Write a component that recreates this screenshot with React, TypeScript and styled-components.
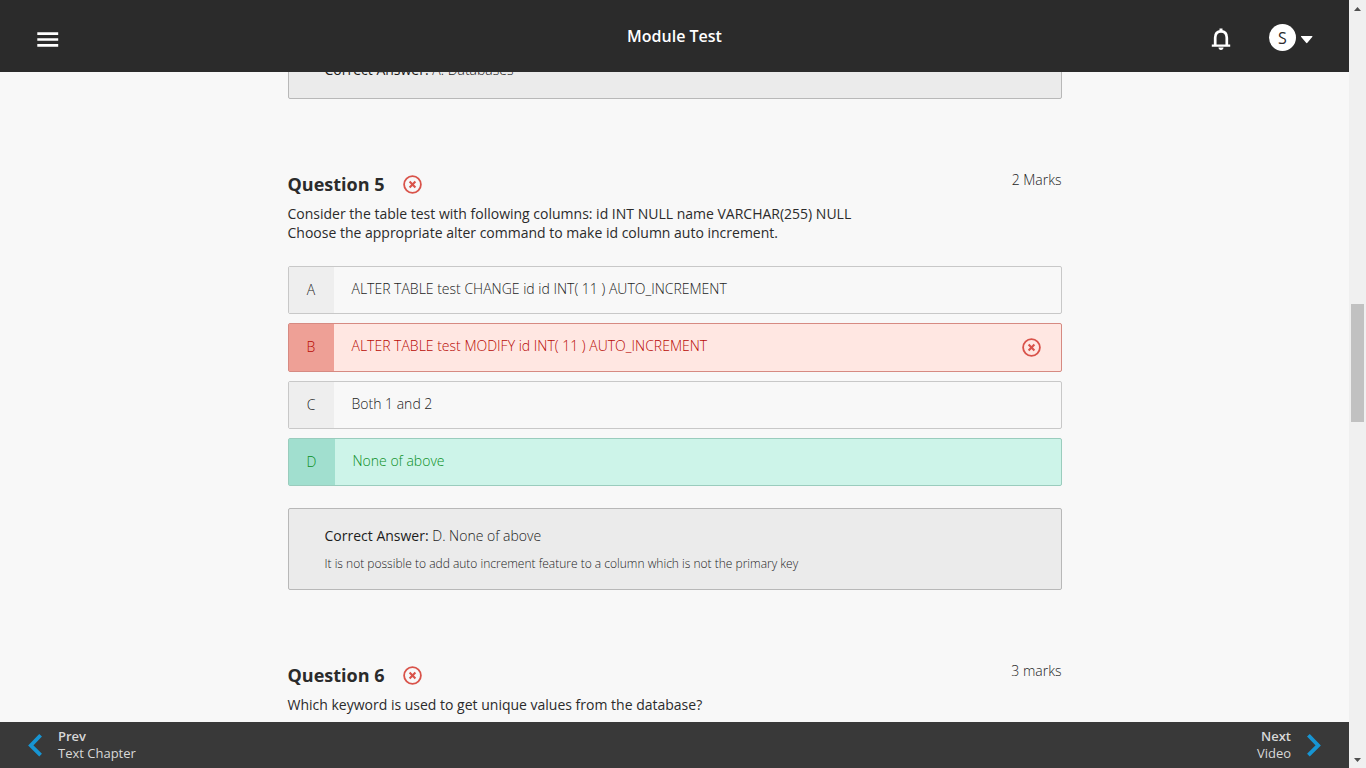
import React from "react";
import styled, { createGlobalStyle } from "styled-components";

const GlobalStyle = createGlobalStyle`
  *, *::before, *::after { box-sizing: border-box; }
  body {
    margin: 0;
    background: #f8f8f8;
    color: #2b2b2b;
    font-family: "Open Sans", "Noto Sans", sans-serif;
    font-size: 14px;
    line-height: 19px;
  }
  h1, h2, p, ul { margin: 0; padding: 0; }
  button { border: 0; padding: 0; background: none; color: inherit; font: inherit; cursor: pointer; }
`;

type Status = "plain" | "wrong" | "correct";

const palette: Record<Status, { border: string; key: string; fill: string; text: string }> = {
  plain: { border: "#c8c8c8", key: "#eeeeee", fill: "#f8f8f8", text: "#1c1c1c" },
  wrong: { border: "#d68a82", key: "#eea096", fill: "#ffe7e2", text: "#b80a04" },
  correct: { border: "#9accbd", key: "#a1dfcf", fill: "#cdf4e9", text: "#0b8f1e" },
};

const Shell = styled.div`
  display: flex;
  height: 100vh;
  overflow: hidden;
`;

const Page = styled.div`
  display: flex;
  flex: 1;
  flex-direction: column;
  min-width: 0;
`;

const TopBar = styled.header`
  display: grid;
  grid-template-columns: 1fr auto 1fr;
  flex: none;
  align-items: center;
  height: 72px;
  padding: 6px 36px 0 36px;
  background: #2b2b2b;
  color: #fff;
`;

const IconButton = styled.button`
  display: flex;
  align-items: center;
  justify-self: start;
`;

const PageTitle = styled.h1`
  padding-bottom: 6px;
  font-size: 16px;
  font-weight: 600;
  line-height: 22px;
`;

const Account = styled.div`
  display: flex;
  align-items: center;
  justify-self: end;
  gap: 37px;
`;

const ProfileButton = styled.button`
  display: flex;
  align-items: center;
  gap: 4px;
`;

const Avatar = styled.span`
  width: 27px;
  height: 27px;
  margin-bottom: 4px;
  border-radius: 50%;
  background: #fff;
  color: #2b2b2b;
  font-size: 16px;
  line-height: 28px;
  text-align: center;
`;

const Content = styled.main`
  flex: 1;
  min-height: 0;
  overflow: hidden;
`;

const Column = styled.div`
  max-width: 774px;
  margin: -30px auto 0;
`;

const Explanation = styled.section`
  padding: 17px 36px;
  border: 1px solid #b8b8b8;
  border-radius: 2px;
  background: #ebebeb;
  color: #1c1c1c;
  font-weight: 300;
`;

const AnswerLine = styled.p`
  min-height: 21px;
  strong { font-weight: 500; }
`;

const Reason = styled.p`
  margin-top: 8px;
  font-size: 12px;
  line-height: 17px;
`;

const QuestionBlock = styled.section`
  padding-top: 71px;
`;

const QuestionHead = styled.div`
  display: flex;
  justify-content: space-between;
  height: 34px;
`;

const QuestionTitle = styled.h2`
  display: flex;
  align-items: center;
  gap: 18px;
  height: 28px;
  font-size: 18px;
  font-weight: 700;
`;

const Marks = styled.span`
  color: #1c1c1c;
  font-weight: 300;
`;

const Prompt = styled.p`
  font-weight: 500;
`;

const Options = styled.ul`
  display: flex;
  flex-direction: column;
  gap: 9px;
  margin: 24px 0 22px;
  list-style: none;
`;

const OptionRow = styled.li<{ $status: Status }>`
  display: flex;
  min-height: ${({ $status }) => ($status === "wrong" ? 49 : 48)}px;
  border: 1px solid ${({ $status }) => palette[$status].border};
  border-radius: 2px;
  background: ${({ $status }) => palette[$status].fill};
  color: ${({ $status }) => palette[$status].text};
  font-weight: 300;
`;

const OptionKey = styled.span<{ $status: Status }>`
  display: flex;
  flex: none;
  align-items: center;
  justify-content: center;
  width: ${({ $status }) => ($status === "correct" ? 46 : 45)}px;
  padding-bottom: 2px;
  background: ${({ $status }) => palette[$status].key};
`;

const OptionText = styled.span`
  flex: 1;
  padding: 12px 18px;
`;

const OptionMark = styled.span`
  display: flex;
  align-items: center;
  padding-right: 20px;
`;

const BottomBar = styled.nav`
  display: flex;
  flex: none;
  justify-content: space-between;
  height: 46px;
  padding: 0 28px;
  background: #393939;
`;

const StepLink = styled.a<{ $align: "left" | "right" }>`
  display: flex;
  align-items: center;
  gap: 15px;
  color: #d8d8d8;
  font-size: 13px;
  line-height: 17px;
  text-align: ${({ $align }) => $align};
  text-decoration: none;
`;

const StepText = styled.span`
  display: flex;
  flex-direction: column;
  strong { font-weight: 600; }
`;

const Track = styled.div`
  display: flex;
  flex: none;
  flex-direction: column;
  align-items: center;
  width: 17px;
  background: #f0f0f0;
`;

const TrackEnd = styled.span`
  display: flex;
  flex: none;
  align-items: center;
  justify-content: center;
  height: 17px;
`;

const TrackSpace = styled.span<{ $grow: number }>`
  flex: ${({ $grow }) => $grow} 0 0;
`;

const Thumb = styled.span`
  flex: 118 0 0;
  width: 13px;
  background: #c1c1c1;
`;

function WrongIcon() {
  return (
    <svg width="19" height="19" viewBox="0 0 19 19" fill="none" stroke="#d9534a" role="img" aria-label="Incorrect">
      <circle cx="9.5" cy="9.5" r="8.4" strokeWidth="1.8" />
      <path d="M6.6 6.6l5.8 5.8M12.4 6.6l-5.8 5.8" strokeWidth="2.1" />
    </svg>
  );
}

function Chevron({ direction }: { direction: "left" | "right" }) {
  return (
    <svg width="15" height="24" viewBox="0 0 15 24" fill="none" stroke="#1795d3" strokeWidth="3.8" aria-hidden="true">
      <path d={direction === "left" ? "M12.6 2.2L2.8 12.4l9.8 9.8" : "M2.4 2.2l9.8 10.2-9.8 9.8"} />
    </svg>
  );
}

function Option({ letter, status = "plain", children }: { letter: string; status?: Status; children: string }) {
  return (
    <OptionRow $status={status}>
      <OptionKey $status={status}>{letter}</OptionKey>
      <OptionText>{children}</OptionText>
      {status === "wrong" && (
        <OptionMark>
          <WrongIcon />
        </OptionMark>
      )}
    </OptionRow>
  );
}

function QuestionHeader({ number, marks }: { number: number; marks: string }) {
  return (
    <QuestionHead>
      <QuestionTitle>
        Question {number}
        <WrongIcon />
      </QuestionTitle>
      <Marks>{marks}</Marks>
    </QuestionHead>
  );
}

export default function App() {
  return (
    <>
      <GlobalStyle />
      <Shell>
        <Page>
          <TopBar>
            <IconButton aria-label="Open menu">
              <svg width="23" height="17" viewBox="0 0 23 17" fill="#fff" aria-hidden="true">
                <path d="M1.3 1.3h20.9v2.6H1.3zM1.3 7.2h20.9v2.6H1.3zM1.3 13.1h20.9v2.6H1.3z" />
              </svg>
            </IconButton>
            <PageTitle>Module Test</PageTitle>
            <Account>
              <IconButton aria-label="Notifications">
                <svg width="22" height="24" viewBox="0 0 22 24" fill="none" aria-hidden="true">
                  <path
                    d="M5.2 18.6V10.8C5.2 7 7.2 4.3 11 4.3s5.8 2.7 5.8 6.5v7.8"
                    stroke="#fff"
                    strokeWidth="2.7"
                  />
                  <path d="M1.8 17.5h18.4v2.3H1.8zM9.5 1.4h3v3h-3zM8.5 20.6h5c0 1.4-1 2.3-2.5 2.3s-2.5-.9-2.5-2.3z" fill="#fff" />
                </svg>
              </IconButton>
              <ProfileButton aria-label="Account menu">
                <Avatar>S</Avatar>
                <svg width="13" height="9" viewBox="0 0 13 9" fill="#fff" aria-hidden="true">
                  <path d="M1.6 1h10.2c.6 0 .8.5.4 1L7.4 7.8c-.4.5-.9.5-1.3 0L1.2 2c-.4-.5-.2-1 .4-1z" />
                </svg>
              </ProfileButton>
            </Account>
          </TopBar>

          <Content>
            <Column>
              <Explanation>
                <AnswerLine>
                  <strong>Correct Answer:</strong> A. Databases
                </AnswerLine>
              </Explanation>

              <QuestionBlock>
                <QuestionHeader number={5} marks="2 Marks" />
                <Prompt>
                  Consider the table test with following columns: id INT NULL name VARCHAR(255) NULL
                  <br />
                  Choose the appropriate alter command to make id column auto increment.
                </Prompt>
                <Options>
                  <Option letter="A">ALTER TABLE test CHANGE id id INT( 11 ) AUTO_INCREMENT</Option>
                  <Option letter="B" status="wrong">
                    ALTER TABLE test MODIFY id INT( 11 ) AUTO_INCREMENT
                  </Option>
                  <Option letter="C">Both 1 and 2</Option>
                  <Option letter="D" status="correct">
                    None of above
                  </Option>
                </Options>
                <Explanation>
                  <AnswerLine>
                    <strong>Correct Answer:</strong> D. None of above
                  </AnswerLine>
                  <Reason>It is not possible to add auto increment feature to a column which is not the primary key</Reason>
                </Explanation>
              </QuestionBlock>

              <QuestionBlock>
                <QuestionHeader number={6} marks="3 marks" />
                <Prompt>Which keyword is used to get unique values from the database?</Prompt>
              </QuestionBlock>
            </Column>
          </Content>

          <BottomBar aria-label="Chapters">
            <StepLink href="#prev" $align="left">
              <Chevron direction="left" />
              <StepText>
                <strong>Prev</strong>
                <span>Text Chapter</span>
              </StepText>
            </StepLink>
            <StepLink href="#next" $align="right">
              <StepText>
                <strong>Next</strong>
                <span>Video</span>
              </StepText>
              <Chevron direction="right" />
            </StepLink>
          </BottomBar>
        </Page>

        <Track aria-hidden="true">
          <TrackEnd>
            <svg width="7" height="4" viewBox="0 0 7 4" fill="#505050">
              <path d="M0 4L3.5 0 7 4z" />
            </svg>
          </TrackEnd>
          <TrackSpace $grow={287} />
          <Thumb />
          <TrackSpace $grow={329} />
          <TrackEnd>
            <svg width="7" height="4" viewBox="0 0 7 4" fill="#505050">
              <path d="M0 0l3.5 4L7 0z" />
            </svg>
          </TrackEnd>
        </Track>
      </Shell>
    </>
  );
}
